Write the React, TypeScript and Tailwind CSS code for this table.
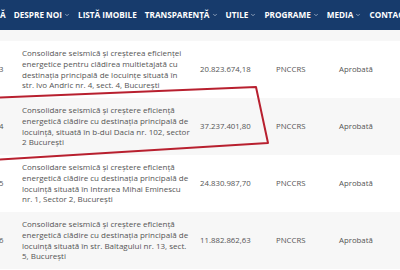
import { ChevronDown } from "lucide-react";

const navItems = [
  { label: "ACASĂ", drop: false },
  { label: "DESPRE NOI", drop: true },
  { label: "LISTĂ IMOBILE", drop: false },
  { label: "TRANSPARENȚĂ", drop: true },
  { label: "UTILE", drop: true },
  { label: "PROGRAME", drop: true },
  { label: "MEDIA", drop: true },
  { label: "CONTACT", drop: false },
];

// line breaks follow the original table's wrapping
const rows = [
  {
    nr: "3",
    lines: [
      "Consolidare seismică și creșterea eficienței",
      "energetice pentru clădirea multietajată cu",
      "destinația principală de locuințe situată în",
      "str. Ivo Andric nr. 4, sect. 4, București",
    ],
    amount: "20.823.674,18",
  },
  {
    nr: "4",
    lines: [
      "Consolidare seismică și creștere eficiență",
      "energetică clădire cu destinația principală de",
      "locuință, situată în b-dul Dacia nr. 102, sector",
      "2 București",
    ],
    amount: "37.237.401,80",
  },
  {
    nr: "5",
    lines: [
      "Consolidare seismică și creștere eficiență",
      "energetică clădire cu destinația principală de",
      "locuință situată în Intrarea Mihai Eminescu",
      "nr. 1, Sector 2, București",
    ],
    amount: "24.830.987,70",
  },
  {
    nr: "6",
    lines: [
      "Consolidare seismică și creștere eficiență",
      "energetică clădire cu destinația principală de",
      "locuință situată în str. Baltagului nr. 13, sect.",
      "5, București",
    ],
    amount: "11.882.862,63",
  },
];

export default function App() {
  return (
    <div
      className="relative w-[400px] h-[270px] overflow-hidden bg-white"
      style={{ fontFamily: '"Open Sans", "Noto Sans", sans-serif' }}
    >
      {/* Nav */}
      <nav className="h-[30px] bg-[#173b6c] flex items-center overflow-hidden whitespace-nowrap">
        <div className="flex items-center gap-[8px] ml-[-21px]">
          {navItems.map((item) => (
            <span
              key={item.label}
              className="flex items-center gap-[2px] text-white font-bold text-[8.2px]"
            >
              {item.label}
              {item.drop && (
                <ChevronDown size={6} strokeWidth={2.5} className="text-[#c9d3e2]" />
              )}
            </span>
          ))}
        </div>
      </nav>

      {/* Table */}
      <div className="h-[11px] bg-[#f7f7f7]" />
      {rows.map((r, i) => (
        <div
          key={r.nr}
          className={`grid grid-cols-[22px_178px_76px_63px_1fr] h-[57px] items-center text-[7.8px] leading-[10.8px] text-[#555] ${
            i % 2 === 0 ? "bg-white" : "bg-[#f7f7f7]"
          }`}
        >
          <div className="ml-[-1px]">{r.nr}</div>
          <div className="whitespace-nowrap text-[8px]">
            {r.lines.map((l) => (
              <div key={l}>{l}</div>
            ))}
          </div>
          <div>{r.amount}</div>
          <div>PNCCRS</div>
          <div>Aprobată</div>
        </div>
      ))}

      {/* hand-drawn highlight */}
      <svg
        className="absolute left-0 top-0 pointer-events-none"
        width="400"
        height="270"
        viewBox="0 0 400 270"
      >
        <path
          d="M-2 97.5 L256 87 L268 143 L-2 159.5"
          fill="none"
          stroke="#b8202f"
          strokeWidth="2"
          strokeLinejoin="round"
        />
      </svg>
    </div>
  );
}
